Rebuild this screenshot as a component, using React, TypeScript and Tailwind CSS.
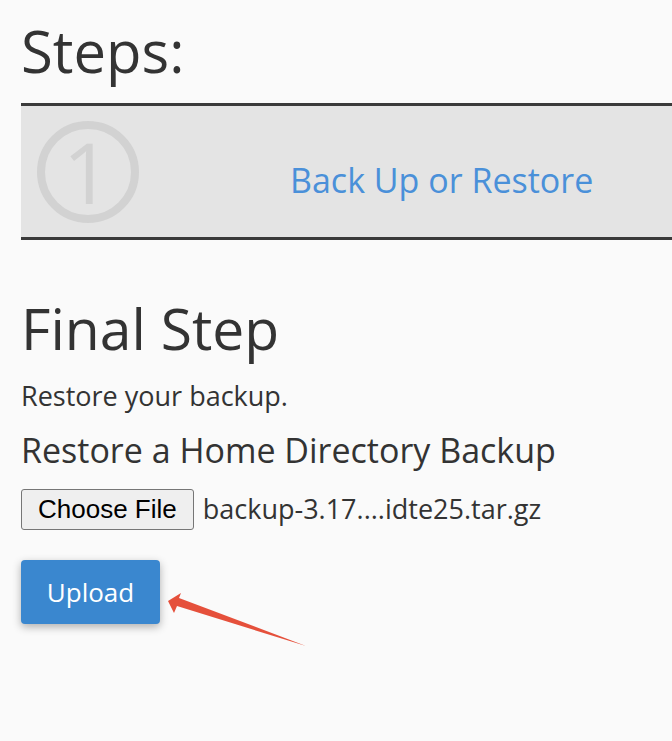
import React from 'react';

const StepCircle: React.FC = () => (
  <svg width="106" height="106" viewBox="0 0 106 106" className="shrink-0 overflow-visible">
    <circle cx="53" cy="53" r="47" fill="none" stroke="#d2d2d2" strokeWidth="8" />
    <text
      x="52"
      y="85"
      textAnchor="middle"
      className="font-['Open_Sans',sans-serif] text-[85px]"
      fill="#d2d2d2"
    >
      1
    </text>
  </svg>
);

const App: React.FC = () => {
  return (
    <div className="relative min-h-[741px] w-[672px] overflow-hidden bg-[#fafafa] font-['Open_Sans',sans-serif] text-[#333]">
      <div className="pl-[21px] pt-[14px]">
        <h1 className="text-[58px] leading-[74px]">Steps:</h1>

        <div className="mt-[15px] flex h-[137px] w-[700px] items-center border-y-[3px] border-[#3a3a3a] bg-[#e4e4e4] pl-[14px]">
          <StepCircle />
          <a href="#" className="ml-[149px] mt-[18px] text-[34px] text-[#4a90d9]">
            Back Up or Restore
          </a>
        </div>

        <h2 className="mt-[53px] text-[57px] leading-[70px]">Final Step</h2>
        <p className="mt-[18px] text-[27px] leading-[30px]">Restore your backup.</p>
        <h3 className="mt-[17px] text-[34px] leading-[44px]">Restore a Home Directory Backup</h3>

        <div className="mt-[17px] flex items-center gap-[9px]">
          <button className="h-[41px] rounded-[3px] border border-[#767676] bg-[#efefef] px-[16px] font-['Liberation_Sans',Arial,sans-serif] text-[26px] text-black">
            Choose File
          </button>
          <span className="text-[27px] text-[#333]">backup-3.17....idte25.tar.gz</span>
        </div>

        <button className="mt-[30px] h-[64px] w-[139px] rounded-[4px] bg-[#3a87cf] text-[26px] text-white shadow-[0_3px_8px_rgba(0,0,0,0.3)]">
          Upload
        </button>
      </div>

      <svg className="absolute left-0 top-0" width="672" height="741" viewBox="0 0 672 741">
        <polygon points="168,601 181,593 179,598 306,646 177,606 174,613" fill="#e5503b" />
      </svg>
    </div>
  );
};

export default App;
